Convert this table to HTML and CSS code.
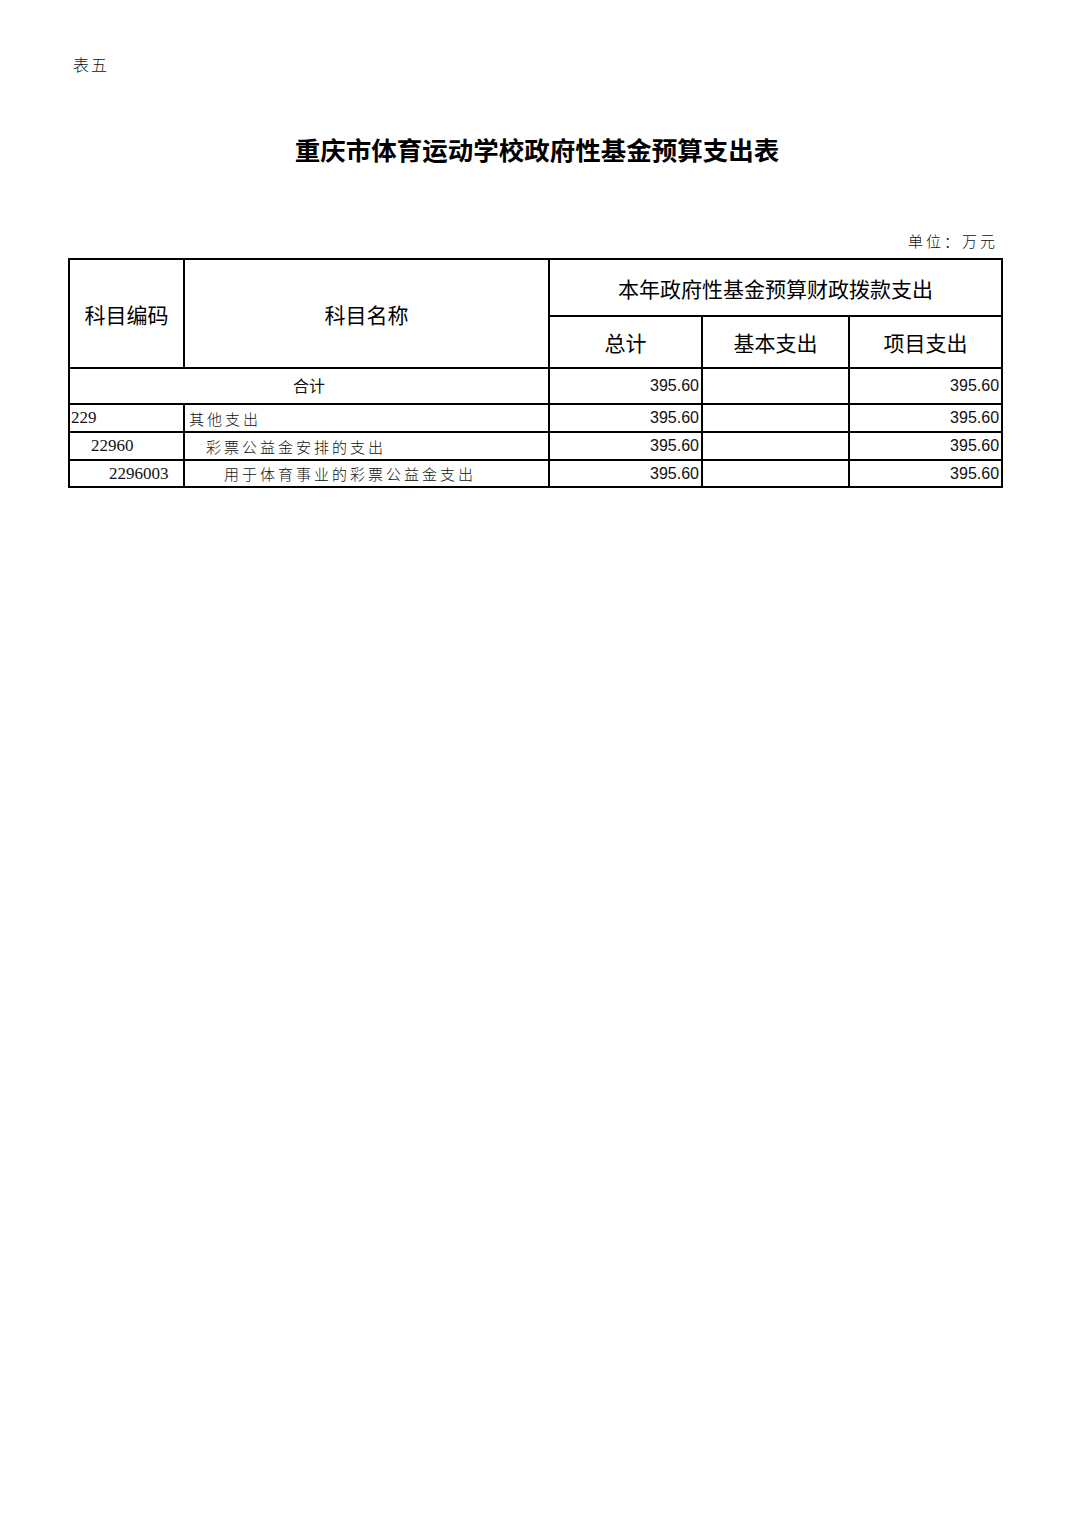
FILE: index.html
```html
<!DOCTYPE html>
<html lang="zh">
<head>
<meta charset="utf-8">
<title>重庆市体育运动学校政府性基金预算支出表</title>
<link rel="stylesheet" href="styles.css">
</head>
<body>
<div class="page">
  <div class="tag">表五</div>
  <h1 class="title">重庆市体育运动学校政府性基金预算支出表</h1>
  <div class="unit">单位：万元</div>
  <table class="sheet">
    <colgroup>
      <col class="c1"><col class="c2"><col class="c3"><col class="c4"><col class="c5">
    </colgroup>
    <thead>
      <tr class="h1">
        <th rowspan="2">科目编码</th>
        <th rowspan="2">科目名称</th>
        <th colspan="3">本年政府性基金预算财政拨款支出</th>
      </tr>
      <tr class="h2">
        <th>总计</th>
        <th>基本支出</th>
        <th>项目支出</th>
      </tr>
    </thead>
    <tbody>
      <tr class="total">
        <td colspan="2" class="sum">合计</td>
        <td class="num">395.60</td>
        <td class="num"></td>
        <td class="num">395.60</td>
      </tr>
      <tr class="row">
        <td class="code">229</td>
        <td class="name">其他支出</td>
        <td class="num">395.60</td>
        <td class="num"></td>
        <td class="num">395.60</td>
      </tr>
      <tr class="row">
        <td class="code lv2">22960</td>
        <td class="name lv2">彩票公益金安排的支出</td>
        <td class="num">395.60</td>
        <td class="num"></td>
        <td class="num">395.60</td>
      </tr>
      <tr class="row last">
        <td class="code lv3">2296003</td>
        <td class="name lv3">用于体育事业的彩票公益金支出</td>
        <td class="num">395.60</td>
        <td class="num"></td>
        <td class="num">395.60</td>
      </tr>
    </tbody>
  </table>
</div>
</body>
</html>
```

FILE: styles.css
```css
html, body {
  margin: 0;
  padding: 0;
  background: #ffffff;
}

body {
  font-family: "Noto Sans CJK SC", "Noto Sans", sans-serif;
  color: #111;
}

.page {
  width: 1074px;
  height: 1520px;
  padding-top: 53px;
  box-sizing: border-box;
}

.tag {
  margin-left: 73px;
  font-size: 16px;
  line-height: 22px;
  letter-spacing: 2px;
  font-weight: 300;
}

.title {
  margin: 54px 0 0 0;
  text-align: center;
  font-size: 25.5px;
  line-height: 40px;
  font-weight: 700;
  color: #000;
}

.unit {
  margin-top: 62px;
  margin-right: 76px;
  text-align: right;
  font-size: 15px;
  line-height: 20px;
  letter-spacing: 3px;
  font-weight: 300;
}

.sheet {
  margin: 7px 0 0 68px;
  border-collapse: collapse;
  table-layout: fixed;
  width: 935px;
}

.c1 { width: 115px; }
.c2 { width: 365px; }
.c3 { width: 153px; }
.c4 { width: 147px; }
.c5 { width: 153px; }

.sheet th,
.sheet td {
  border: 2px solid #000;
  padding: 0;
  overflow: hidden;
  white-space: nowrap;
}

.sheet th {
  font-size: 21px;
  font-weight: 400;
  text-align: center;
  color: #000;
}

.h1 th { height: 55px; }
.h2 th { height: 50px; }

.total td { height: 34px; }
.total td.sum { height: 30px; }
.row td { height: 26px; }
.row.last td { height: 25px; }

.sum {
  text-align: center;
  font-size: 16px;
  vertical-align: top;
  padding-top: 4px !important;
}

.num {
  text-align: right;
  font-family: "Liberation Sans", Arial, sans-serif;
  font-size: 16px;
  padding-right: 2px !important;
}

.code {
  font-family: "Liberation Serif", "Times New Roman", serif;
  font-size: 17px;
  padding-left: 1px !important;
}

.code.lv2 { padding-left: 21px !important; }
.code.lv3 { padding-left: 39px !important; }

.name {
  font-size: 15px;
  letter-spacing: 3px;
  font-weight: 300;
  padding-left: 4px !important;
}

.name.lv2 { padding-left: 21px !important; }
.name.lv3 { padding-left: 39px !important; }
```
